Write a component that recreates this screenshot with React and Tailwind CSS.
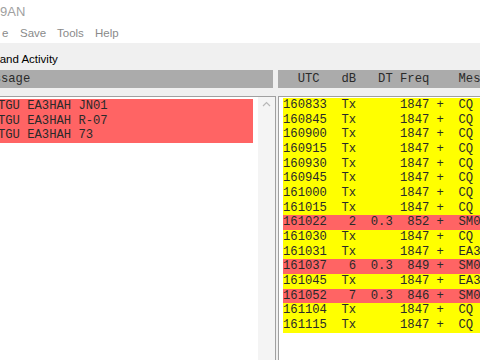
const rows = [
  { t: "160833  Tx      1847 +  CQ EA3HAH JN01", c: "y" },
  { t: "160845  Tx      1847 +  CQ EA3HAH JN01", c: "y" },
  { t: "160900  Tx      1847 +  CQ EA3HAH JN01", c: "y" },
  { t: "160915  Tx      1847 +  CQ EA3HAH JN01", c: "y" },
  { t: "160930  Tx      1847 +  CQ EA3HAH JN01", c: "y" },
  { t: "160945  Tx      1847 +  CQ EA3HAH JN01", c: "y" },
  { t: "161000  Tx      1847 +  CQ EA3HAH JN01", c: "y" },
  { t: "161015  Tx      1847 +  CQ EA3HAH JN01", c: "y" },
  { t: "161022   2  0.3  852 +  SM0TGU EA3HAH JN01", c: "r" },
  { t: "161030  Tx      1847 +  CQ EA3HAH JN01", c: "y" },
  { t: "161031  Tx      1847 +  EA3HAH SM0TGU JO89", c: "y" },
  { t: "161037   6  0.3  849 +  SM0TGU EA3HAH R-07", c: "r" },
  { t: "161045  Tx      1847 +  EA3HAH SM0TGU RRR", c: "y" },
  { t: "161052   7  0.3  846 +  SM0TGU EA3HAH 73", c: "r" },
  { t: "161104  Tx      1847 +  CQ EA3HAH JN01", c: "y" },
  { t: "161115  Tx      1847 +  CQ EA3HAH JN01", c: "y" },
];

const rxLines = ["SM0TGU EA3HAH JN01", "SM0TGU EA3HAH R-07", "SM0TGU EA3HAH 73"];

const mono = "font-['Liberation_Mono','Courier_New',monospace] text-[12.2px] text-[#2a2a2a]";

export default function App() {
  return (
    <div className="w-[480px] h-[360px] overflow-hidden bg-[#f0f0f0] flex flex-col font-['Liberation_Sans',Arial,sans-serif]">
      {/* title bar */}
      <div className="h-[25px] bg-white text-[13px] text-[#a0a0a0] leading-[24px] pl-[0px] shrink-0">9AN</div>

      {/* menu */}
      <div className="h-[18px] bg-white flex text-[11.5px] text-[#8a8a8a] leading-[16px] shrink-0">
        <span className="ml-[2px] w-[18px]">e</span>
        <span className="w-[37px]">Save</span>
        <span className="w-[38px]">Tools</span>
        <span>Help</span>
      </div>

      {/* label */}
      <div className="h-[27px] text-[11.5px] text-black leading-[33px] shrink-0 whitespace-nowrap overflow-hidden">
        <span className="ml-[-8px]">Band Activity</span>
      </div>

      <div className="flex flex-1 min-h-0">
        {/* left: rx frequency */}
        <div className="w-[276px] flex flex-col shrink-0">
          <div className={`h-[18px] w-[273px] bg-[#ababab] leading-[18px] whitespace-pre overflow-hidden ${mono}`}>
            <span className="ml-[-21px]">Message</span>
          </div>
          <div className="h-[8px]" />
          <div className="flex-1 flex bg-white border-t border-[#a0a0a0] border-r">
            <div className="flex-1 pt-[2px] overflow-hidden">
              <div className="w-[253px] bg-[#ff6464]">
                {rxLines.map((l) => (
                  <div key={l} className={`h-[14.67px] leading-[14.67px] whitespace-pre ${mono}`}>
                    <span className="ml-[-24px]">{l}</span>
                  </div>
                ))}
              </div>
            </div>
            <div className="w-[17px] bg-[#f4f4f4] flex justify-center pt-[4px]">
              <svg width="9" height="6" viewBox="0 0 9 6">
                <path d="M1 5 L4.5 1.5 L8 5" fill="none" stroke="#b8b8b8" strokeWidth="1.2" />
              </svg>
            </div>
          </div>
        </div>

        <div className="w-[2px] shrink-0" />

        {/* right: band activity */}
        <div className="flex-1 flex flex-col min-w-0">
          <div className={`h-[18px] bg-[#ababab] leading-[18px] whitespace-pre overflow-hidden pl-[5px] ${mono}`}>
            {"  UTC   dB   DT Freq    Message"}
          </div>
          <div className="h-[8px]" />
          <div className="flex-1 bg-white border-t border-l border-[#a0a0a0] pl-[4px] pt-[1px] overflow-hidden">
            {rows.map((r) => (
              <div
                key={r.t}
                className={`h-[14.67px] leading-[14.67px] whitespace-pre overflow-hidden ${mono} ${
                  r.c === "r" ? "bg-[#ff6464]" : "bg-[#ffff00]"
                }`}
              >
                {r.t}
              </div>
            ))}
          </div>
        </div>
      </div>
    </div>
  );
}
